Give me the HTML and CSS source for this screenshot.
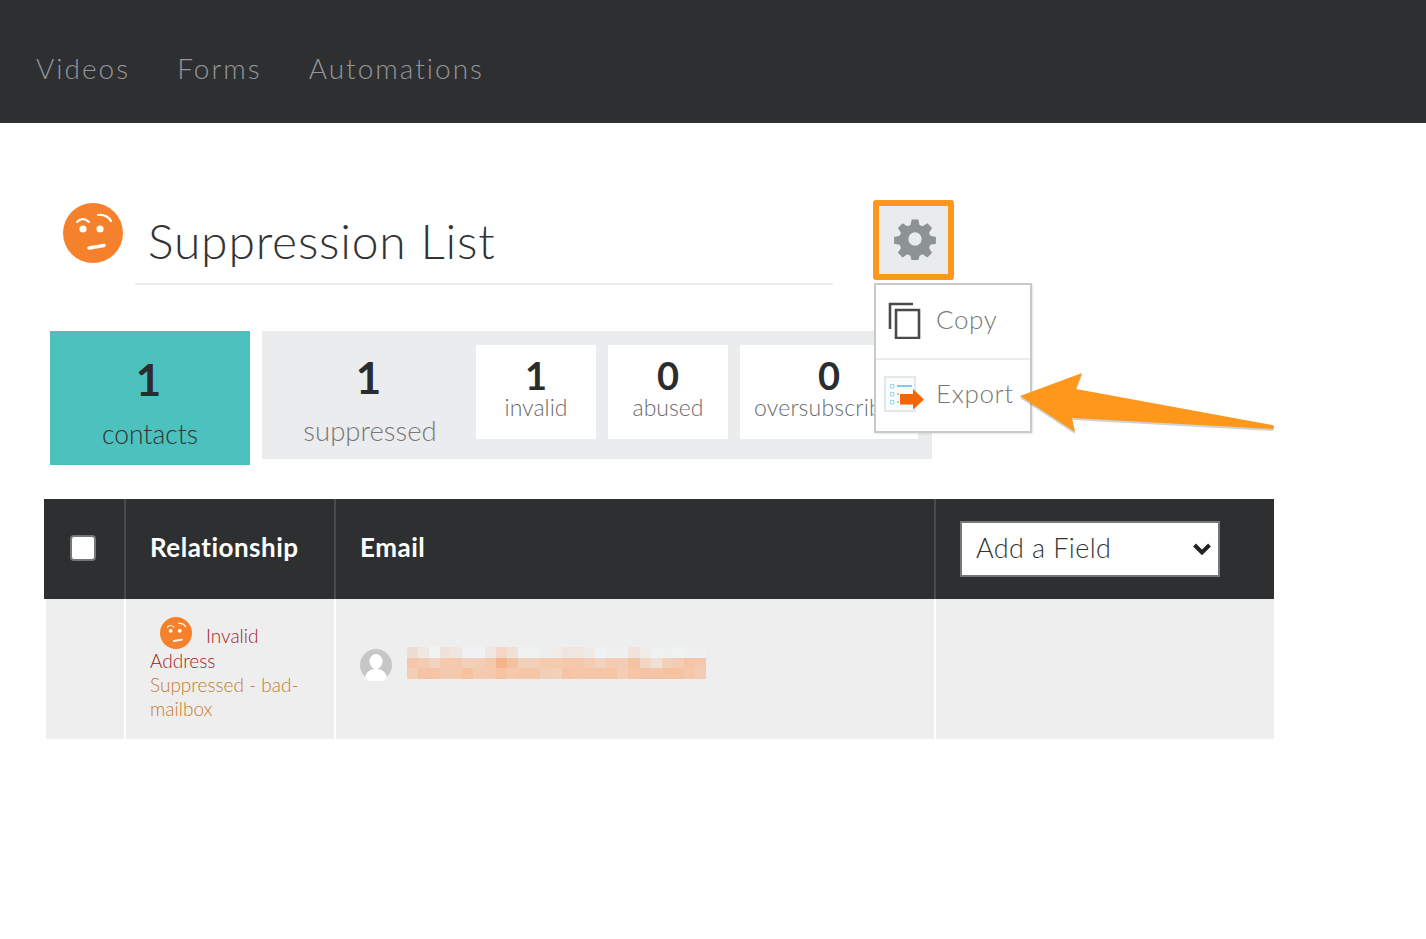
FILE: index.html
```html
<!DOCTYPE html>
<html lang="en">
<head>
<meta charset="utf-8">
<title>Suppression List</title>
<link rel="stylesheet" href="styles.css">
</head>
<body>
<svg class="defs" width="0" height="0" aria-hidden="true">
  <symbol id="face" viewBox="0 0 60 60">
    <circle cx="30" cy="30" r="30" fill="#f6812c"/>
    <circle cx="20" cy="26" r="3.600" fill="#fff"/>
    <circle cx="37" cy="26" r="3.600" fill="#fff"/>
    <path d="M14 19q6-6 12 0M35 12q9-1 13 6" fill="none" stroke="#fff" stroke-width="2.200" stroke-linecap="round"/>
    <path d="M26 45l15-2.500" fill="none" stroke="#fff" stroke-width="3.400" stroke-linecap="round"/>
  </symbol>
</svg>
<header class="topbar">
  <nav class="nav">
    <a class="nav-link">Videos</a>
    <a class="nav-link">Forms</a>
    <a class="nav-link">Automations</a>
  </nav>
</header>
<main class="page">
  <section class="title-row">
    <svg class="face-large"><use href="#face"/></svg>
    <h1 class="title">Suppression List</h1>
    <div class="gear-wrap">
      <button class="gear-btn" aria-label="Settings">
        <svg viewBox="0 0 44 44" width="42" height="42"><path fill="#8d9293" fill-rule="evenodd" d="M18.500 1.500h7l1.200 5.800 3.300 1.400 5-3.200 4.900 4.900-3.200 5 1.400 3.300 5.800 1.200v7l-5.800 1.200-1.400 3.300 3.200 5-4.900 4.900-5-3.200-3.300 1.400-1.200 5.800h-7l-1.200-5.800-3.300-1.400-5 3.200-4.900-4.900 3.200-5-1.400-3.300-5.800-1.200v-7l5.800-1.200 1.400-3.300-3.200-5 4.900-4.900 5 3.200 3.300-1.400zM22 15a7 7 0 1 0 0 14 7 7 0 0 0 0-14z"/></svg>
      </button>
      <div class="menu">
        <div class="menu-item">
          <svg class="menu-icon" viewBox="0 0 36 40" width="36" height="40"><path d="M26 5H3V30M9 11h23v28H9z" fill="none" stroke="#4a4a4a" stroke-width="2.600"/></svg>
          <span>Copy</span>
        </div>
        <div class="menu-item">
          <svg class="menu-icon icon-export" viewBox="0 0 40 36" width="40" height="36">
            <rect x="1" y="1" width="30" height="34" fill="#fbfcfc" stroke="#e4e8e8" stroke-width="2"/>
            <path d="M13 10h15" stroke="#7ccbe8" stroke-width="2"/>
            <path d="M6.500 8.500h3.500v3.500H6.500zM6.500 16.500h3.500v3.500H6.500zM6.500 24.500h3.500v3.500H6.500z" fill="none" stroke="#9fd3e6"/>
            <path d="M13 18h2M13 26h2" stroke="#7ccbe8" stroke-width="1.500"/>
            <path d="M16 18h13v-5l11 10.500-11 10v-5H16z" fill="#f86400"/>
          </svg>
          <span>Export</span>
        </div>
      </div>
    </div>
  </section>

  <section class="stats">
    <div class="stat-main">
      <div class="num">1</div>
      <div class="stat-label">contacts</div>
    </div>
    <div class="stat-panel">
      <div class="stat-sum">
        <div class="num">1</div>
        <div class="stat-label muted">suppressed</div>
      </div>
      <div class="stat-card"><div class="num-sm">1</div><div class="card-label">invalid</div></div>
      <div class="stat-card"><div class="num-sm">0</div><div class="card-label">abused</div></div>
      <div class="stat-card wide"><div class="num-sm">0</div><div class="card-label">oversubscribed</div></div>
    </div>
  </section>

  <section class="table">
    <div class="th"><input class="check" type="checkbox" aria-label="Select all"></div>
    <div class="th th-text">Relationship</div>
    <div class="th th-text">Email</div>
    <div class="th th-last">
      <div class="select-wrap">
        <select class="select"><option>Add a Field</option></select>
        <svg class="chev" viewBox="0 0 20 14" width="20" height="14"><path d="M2.500 3l7.500 7.500L17.500 3" fill="none" stroke="#222" stroke-width="4"/></svg>
      </div>
    </div>
    <div class="td td-first"></div>
    <div class="td td-rel">
      <div class="status"><svg class="face-small"><use href="#face"/></svg><span>Invalid Address</span></div>
      <div class="reason">Suppressed - bad-mailbox</div>
    </div>
    <div class="td td-email">
      <svg class="avatar" viewBox="0 0 32 32" width="32" height="32"><circle cx="16" cy="16" r="16" fill="#c6c6c6"/><ellipse cx="16" cy="12.500" rx="6.500" ry="7.500" fill="#fff"/><path d="M5 29c1-7 6-9 11-9s10 2 11 9a16 16 0 0 1-22 0z" fill="#fff"/></svg>
      <svg class="blur" viewBox="0 0 27 3" width="299" height="32" preserveAspectRatio="none" shape-rendering="crispEdges">
        <g>
          <rect x="0" y="0" width="1" height="1" fill="#eeddd3"/><rect x="1" y="0" width="1" height="1" fill="#efe8e3"/><rect x="2" y="0" width="1" height="1" fill="#eef4f3"/><rect x="3" y="0" width="1" height="1" fill="#f0e2da"/><rect x="4" y="0" width="1" height="1" fill="#f0e6df"/><rect x="5" y="0" width="2" height="1" fill="#f0f1f2"/><rect x="7" y="0" width="1" height="1" fill="#f0e7e2"/><rect x="8" y="0" width="1" height="1" fill="#f4d6c5"/><rect x="9" y="0" width="1" height="1" fill="#f1e0d5"/><rect x="10" y="0" width="1" height="1" fill="#f0f2f2"/><rect x="11" y="0" width="1" height="1" fill="#f0f1f1"/><rect x="12" y="0" width="1" height="1" fill="#efefef"/><rect x="13" y="0" width="1" height="1" fill="#f0ece9"/><rect x="14" y="0" width="2" height="1" fill="#f0e5df"/><rect x="16" y="0" width="1" height="1" fill="#f0ebe7"/><rect x="17" y="0" width="1" height="1" fill="#f0f3f4"/><rect x="18" y="0" width="2" height="1" fill="#f0f0f0"/><rect x="20" y="0" width="1" height="1" fill="#f0e2dd"/><rect x="21" y="0" width="1" height="1" fill="#f0ecea"/><rect x="22" y="0" width="1" height="1" fill="#f0f1f3"/><rect x="23" y="0" width="1" height="1" fill="#eff0f0"/><rect x="24" y="0" width="1" height="1" fill="#f0f2f3"/><rect x="25" y="0" width="2" height="1" fill="#f0f0f0"/>
        </g>
        <g>
          <rect x="0" y="1" width="1" height="1" fill="#f5c8ad"/><rect x="1" y="1" width="1" height="1" fill="#f5cbb2"/><rect x="2" y="1" width="1" height="1" fill="#f3d2bf"/><rect x="3" y="1" width="2" height="1" fill="#f5c9ae"/><rect x="5" y="1" width="1" height="1" fill="#f3d0bc"/><rect x="6" y="1" width="1" height="1" fill="#f4cdb7"/><rect x="7" y="1" width="1" height="1" fill="#f5c8ac"/><rect x="8" y="1" width="1" height="1" fill="#f6b48c"/><rect x="9" y="1" width="1" height="1" fill="#f5c09e"/><rect x="10" y="1" width="2" height="1" fill="#f4d0ba"/><rect x="12" y="1" width="2" height="1" fill="#f5cbb0"/><rect x="14" y="1" width="2" height="1" fill="#f5c7ab"/><rect x="16" y="1" width="1" height="1" fill="#f5cbb2"/><rect x="17" y="1" width="1" height="1" fill="#f3d2c0"/><rect x="18" y="1" width="1" height="1" fill="#f5cbb2"/><rect x="19" y="1" width="1" height="1" fill="#f4ccb5"/><rect x="20" y="1" width="1" height="1" fill="#f5c3a3"/><rect x="21" y="1" width="1" height="1" fill="#f2d7c6"/><rect x="22" y="1" width="1" height="1" fill="#f0e0d6"/><rect x="23" y="1" width="1" height="1" fill="#f4cfba"/><rect x="24" y="1" width="1" height="1" fill="#f4cbb3"/><rect x="25" y="1" width="1" height="1" fill="#f5c4a7"/><rect x="26" y="1" width="1" height="1" fill="#f5c8ad"/>
        </g>
        <g>
          <rect x="0" y="2" width="1" height="1" fill="#f4cdb5"/><rect x="1" y="2" width="1" height="1" fill="#f5c4a6"/><rect x="2" y="2" width="1" height="1" fill="#f5c5a7"/><rect x="3" y="2" width="2" height="1" fill="#f5c9ad"/><rect x="5" y="2" width="1" height="1" fill="#f6c2a0"/><rect x="6" y="2" width="1" height="1" fill="#f5cbb0"/><rect x="7" y="2" width="1" height="1" fill="#f5c9ad"/><rect x="8" y="2" width="1" height="1" fill="#f6c4a3"/><rect x="9" y="2" width="1" height="1" fill="#f5c9ad"/><rect x="10" y="2" width="2" height="1" fill="#f5c6a8"/><rect x="12" y="2" width="1" height="1" fill="#f4cfb7"/><rect x="13" y="2" width="1" height="1" fill="#f3d0ba"/><rect x="14" y="2" width="1" height="1" fill="#f5c4a6"/><rect x="15" y="2" width="1" height="1" fill="#f5c6a8"/><rect x="16" y="2" width="3" height="1" fill="#f5c5a7"/><rect x="19" y="2" width="1" height="1" fill="#f4cdb4"/><rect x="20" y="2" width="1" height="1" fill="#f5c5a8"/><rect x="21" y="2" width="2" height="1" fill="#f5c4a6"/><rect x="23" y="2" width="2" height="1" fill="#f5c2a2"/><rect x="25" y="2" width="1" height="1" fill="#f5c7ab"/><rect x="26" y="2" width="1" height="1" fill="#f4cbb3"/>
        </g>
      </svg>
    </div>
    <div class="td td-last"></div>
  </section>

  <svg class="callout" viewBox="0 0 270 70" width="270" height="70" aria-hidden="true">
    <path class="callout-shadow" d="M6 25L68 2 62 18 258 54a2 2 0 0 1 0 4L58 47 61 61z"/>
    <path class="callout-arrow" d="M6 23L68 0 62 16 258 52a2 2 0 0 1 0 4L58 45 61 59z"/>
  </svg>
</main>
</body>
</html>
```

FILE: styles.css
```css
* { box-sizing: border-box; }
html, body { margin: 0; padding: 0; background: #fff; }
body {
  font-family: "Lato", "Liberation Sans", sans-serif;
  font-weight: 300;
  color: #2e2f31;
  min-height: 939px;
  overflow: hidden;
}
.defs { position: absolute; }

.topbar {
  height: 123px;
  background: #2e2f31;
  display: flex;
  align-items: flex-end;
  padding: 0 0 38px 36px;
}
.nav { display: flex; gap: 47px; }
.nav-link {
  font-size: 28px;
  line-height: 34px;
  letter-spacing: 2px;
  color: #94969a;
}

.page {
  position: relative;
  padding: 77px 0 0 44px;
  width: 1274px;
}

.title-row { display: flex; align-items: flex-start; height: 85px; }
.face-large { width: 60px; height: 60px; margin: 3px 0 0 19px; flex: none; }
.title {
  width: 698px;
  height: 85px;
  margin: 0 0 0 12px;
  padding: 8px 0 0 13px;
  border-bottom: 2px solid #ebeeee;
  font-size: 48px;
  line-height: 66px;
  font-weight: 300;
  letter-spacing: .8px;
  color: #333;
}
.gear-wrap { position: relative; margin-left: 40px; }
.gear-btn {
  display: flex;
  align-items: center;
  justify-content: center;
  width: 81px;
  height: 80px;
  padding: 0 0 2px 2px;
  border: 6px solid #fd981d;
  border-radius: 3px;
  background: #e9eced;
}
.menu {
  position: absolute;
  z-index: 2;
  top: 83px;
  left: 1px;
  width: 158px;
  height: 150px;
  background: #fff;
  border: 2px solid #c8c9c9;
  box-shadow: 1px 1px 2px rgba(0,0,0,.1);
}
.menu-item {
  height: 73px;
  display: flex;
  align-items: center;
  padding-bottom: 5px;
  font-size: 26px;
  color: #77787a;
  letter-spacing: .6px;
}
.menu-item + .menu-item { border-top: 2px solid #e9eded; }
.menu-item span { position: absolute; left: 60px; }
.menu-icon { margin-left: 11px; flex: none; }
.icon-export { margin: 2px 0 0 8px; }

.stats { display: flex; align-items: flex-start; margin: 46px 0 0 6px; }
.stat-main {
  width: 200px;
  height: 134px;
  background: #4cc1bd;
  text-align: center;
}
.num { font-size: 44px; font-weight: 700; line-height: 52px; color: #2b2c2e; padding: 22px 3px 0 0; }
.stat-label { font-size: 26.500px; line-height: 34px; padding-top: 12px; color: #333; }
.stat-panel {
  display: flex;
  gap: 12px;
  width: 670px;
  height: 128px;
  margin-left: 12px;
  padding: 14px;
  background: #ebecee;
}
.stat-sum { width: 216px; margin: -14px -14px 0 -14px; text-align: center; flex: none; }
.stat-sum .num { padding-top: 20px; }
.stat-sum .stat-label { padding-top: 11px; font-size: 27.500px; }
.stat-sum .muted { color: #77787a; }
.stat-card {
  width: 120px;
  height: 94px;
  background: #fff;
  text-align: center;
  flex: none;
}
.stat-card.wide { width: 178px; }
.num-sm { font-size: 38px; font-weight: 700; line-height: 36px; padding-top: 12px; color: #2b2c2e; }
.card-label { font-size: 23px; line-height: 28px; color: #6a6b6d; }
.wide .card-label {
  width: 121px;
  margin-left: 14px;
  overflow: hidden;
  white-space: nowrap;
  text-align: left;
  letter-spacing: .2px;
}

.table {
  display: grid;
  grid-template-columns: 82px 210px 600px 338px;
  grid-template-rows: 100px 140px;
  margin-top: 34px;
}
.th {
  background: #2e2f31;
  border-right: 2px solid #4a4b4d;
  display: flex;
  align-items: center;
}
.th:first-child { justify-content: center; padding: 0 2px 2px 0; }
.th-text {
  padding: 0 0 4px 24px;
  font-size: 26px;
  font-weight: 700;
  letter-spacing: .5px;
  color: #fff;
}
.th-last { border-right: 0; padding-left: 24px; }
.check {
  appearance: none;
  width: 26px;
  height: 26px;
  margin: 0;
  background: #fff;
  border: 2px solid #777;
  border-radius: 4px;
}
.select-wrap { position: relative; width: 260px; height: 56px; }
.select {
  appearance: none;
  width: 100%;
  height: 100%;
  padding: 0 0 4px 14px;
  border: 2px solid #777;
  border-radius: 0;
  background: #fff;
  font-family: inherit;
  font-weight: 300;
  font-size: 27px;
  letter-spacing: .4px;
  color: #333;
}
.chev { position: absolute; top: 21px; right: 8px; }

.td { background: #eee; border-right: 2px solid #fff; }
.td-first { border-left: 2px solid #fff; }
.td-last { border-right: 0; }
.td-rel {
  padding: 18px 20px 0 24px;
  font-size: 19px;
  line-height: 24px;
  font-weight: 300;
}
.status { color: #a31a22; }
.face-small {
  width: 32px;
  height: 32px;
  margin: 0 14px 0 10px;
  vertical-align: -6px;
}
.reason { color: #cc7a2a; }
.td-email {
  display: flex;
  align-items: flex-start;
  padding: 50px 0 0 24px;
}
.avatar { flex: none; }
.blur { flex: none; margin: -2px 0 0 15px; filter: blur(.6px); }

.callout {
  position: absolute;
  z-index: 3;
  left: 1014px;
  top: 250px;
}
.callout-arrow { fill: #fd981d; }
.callout-shadow { fill: rgba(0,0,0,.18); }
```
